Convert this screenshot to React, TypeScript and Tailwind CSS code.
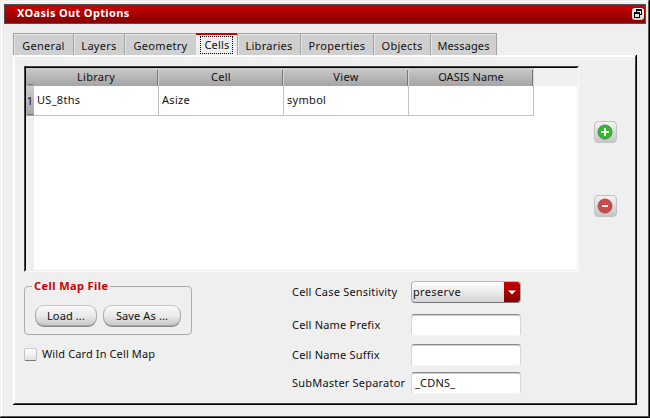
import React from "react";

const tabs = [
  { label: "General", box: "w-[60px]", text: "tracking-[0.27px]" },
  { label: "Layers", box: "w-[51px]", text: "tracking-[0.3px]" },
  { label: "Geometry", box: "w-[72px]", text: "tracking-[0.3px]" },
  { label: "Cells", box: "w-[41px]", text: "tracking-[0.2px]" },
  { label: "Libraries", box: "w-[63px]", text: "tracking-[0.25px]" },
  { label: "Properties", box: "w-[73px]", text: "tracking-[0.35px]" },
  { label: "Objects", box: "w-[57px]", text: "tracking-[0.3px]" },
  { label: "Messages", box: "w-[67px]", text: "tracking-[0.12px]" },
];

const columns = [
  { title: "Library", value: "US_8ths", head: "pl-[1px] tracking-[0.3px]" },
  { title: "Cell", value: "Asize", head: "pl-[1px] tracking-[0.3px]" },
  { title: "View", value: "symbol", head: "pl-[1px] tracking-[0.3px]" },
  { title: "OASIS Name", value: "", head: "pl-[1px] tracking-[0.05px]" },
];

function TitleBar() {
  return (
    <header className="flex h-5 items-center justify-between border border-[#505050] bg-linear-to-b from-[#cc0000] to-[#850000] pl-3 pr-[1px]">
      <h1 className="text-[11px] leading-[16px] pb-[2px] font-bold tracking-[0.34px] text-white">XOasis Out Options</h1>
      <button className="mb-[1px] flex size-3 items-center justify-center rounded-[3px] bg-linear-to-b from-white to-[#cfcfcf]">
        <svg width="10" height="10" viewBox="0 0 10 10" shapeRendering="crispEdges" fill="none" stroke="#000">
          <path d="M3.5 3V.5M3 1.5h6M3 .5h6M8.5 1v5M7 5.5h2M1 3.5h6M1 4.5h6M1.5 4v5M6.5 4v5M1 8.5h6" />
        </svg>
      </button>
    </header>
  );
}

function Tabs() {
  return (
    <nav className="flex h-[22px]">
      {tabs.map((t) =>
        t.label === "Cells" ? (
          <div key={t.label} className={`${t.box} border-t-2 border-[#cc0000] bg-[#efefef] pt-[1px] pr-1 pl-1`}>
            <div className="flex h-[18px] items-center justify-center border border-dotted border-black pb-[2px] pl-[1px]">
              <span className={t.text}>{t.label}</span>
            </div>
          </div>
        ) : (
          <div key={t.label} className={`${t.box} flex items-center justify-center border-t border-l border-[#a2a2a2] bg-[#cfcfcf] pt-[1px] shadow-[inset_1px_1px_0_#e6e6e6] last:border-r`}>
            <span className={t.text}>{t.label}</span>
          </div>
        ),
      )}
    </nav>
  );
}

function CellTable() {
  return (
    <div className="flex h-[206px] w-[555px] flex-col border border-t-[#444] border-l-[#444] border-r-[#fafafa] border-b-[#fafafa]">
      <div className="flex min-h-0 flex-1 flex-col border border-t-black border-r-[#efefef] border-b-[#efefef] border-l-black bg-white">
        <div className="flex h-[18px] bg-[#efefef]">
          <div className="flex w-2 flex-col justify-end bg-linear-to-b from-[#cbcbcb] to-[#a4a4a4] pr-[1px] pb-[1px] pl-[2px]">
            <i className="h-px bg-[#777]" />
          </div>
          {columns.map((c) => (
            <div key={c.title} className="flex w-[125px] items-center bg-linear-to-b from-[#cbcbcb] to-[#a4a4a4]">
              <span className={`${c.head} flex-1 pb-[2px] text-center`}>{c.title}</span>
              <i className="mt-0.5 h-4 w-px bg-[#777]" />
              <i className="mt-0.5 h-4 w-px bg-[#d5d5d5]" />
            </div>
          ))}
        </div>
        <div className="flex h-[30px]">
          <div className="flex w-2 flex-col items-center justify-between bg-linear-to-b from-[#cbcbcb] to-[#a4a4a4] pt-[7px] pb-[1px]">
            <span>1</span>
            <i className="h-px w-[5px] bg-[#777]" />
          </div>
          {columns.map((c) => (
            <div key={c.title} className="flex w-[125px] items-center border-r border-b border-[#c3c3c3] pb-[2px] pl-[3px] tracking-[0.3px]">
              {c.value}
            </div>
          ))}
        </div>
        <div className="w-2 flex-1 bg-[#efefef]" />
      </div>
    </div>
  );
}

function RoundButton({ plus }: { plus?: boolean }) {
  return (
    <button className="flex h-[22px] w-[23px] items-center justify-center rounded-[4px] border border-[#c2c2c2] bg-linear-to-b from-[#f3f3f3] to-[#c6c6c6] pr-[1px]">
      <svg width="16" height="16" viewBox="0 0 16 16">
        <circle cx="8" cy="8" r="7" fill={plus ? "#36b82e" : "#cc4b49"} stroke={plus ? "#468c43" : "#9b5553"} />
        <path d={plus ? "M4 8h8M8 4v8" : "M5 8h6"} stroke="#f3f7f0" strokeWidth="2" />
      </svg>
    </button>
  );
}

function PillButton({ label, size }: { label: string; size: string }) {
  return (
    <button className={`${size} h-[22px] rounded-[9px] border border-t-[#c8c8c8] border-r-[#aaa] border-b-[#858585] border-l-[#aaa] bg-linear-to-b from-[#fafafa] via-[#e9e9e9] to-[#c6c6c6] pb-[2px] tracking-[0.12px] shadow-[inset_0_-1px_0_#aaa]`}>
      {label}
    </button>
  );
}

function Field({ label, value, height }: { label: string; value: string; height: string }) {
  return (
    <label className={`${height} flex items-start`}>
      <span className="w-[119px] leading-[22px] whitespace-nowrap tracking-[0.2px]">{label}</span>
      <span className="h-[22px] w-[110px] rounded-[3px] border border-t-[#898989] border-r-[#d5d5d5] border-b-[#f5f5f5] border-l-[#d5d5d5] bg-white pl-[3px] leading-[20px] tracking-[0.2px] shadow-[inset_0_1px_0_#d0d0d0]">
        {value}
      </span>
    </label>
  );
}

export default function App() {
  return (
    <main className="h-[418px] w-[650px] border-r border-b border-black bg-[#efefef] font-['Noto_Sans','Open_Sans',sans-serif] text-[11px] leading-[15px] text-[#111]">
      <div className="h-full border border-t-[#efefef] border-r-[#555] border-b-[#555] border-l-[#efefef]">
        <div className="h-full border-t border-l border-white pt-[2px] pr-[2px] pl-[2px]">
          <TitleBar />
          <div className="pt-[9px] pr-[9px] pl-[9px]">
            <Tabs />
            <section className="h-[350px] border-r border-b border-black">
              <div className="h-full border-t-2 border-r border-b border-l-2 border-t-white border-r-[#444] border-b-[#444] border-l-white">
                <div className="flex pt-[9px] pl-[9px]">
                  <CellTable />
                  <div className="flex flex-col gap-[52px] pt-[55px] pl-[15px]">
                    <RoundButton plus />
                    <RoundButton />
                  </div>
                </div>
                <div className="flex pl-[9px]">
                  <div className="w-[268px] pt-[6px]">
                    <fieldset className="h-[57px] w-[167px] rounded-[4px] border border-[#acacac] px-[10px]">
                      <legend className="-ml-[3px] px-[2px] pb-[2px] text-[11px] font-bold tracking-[0.42px] text-[#cc0000]">Cell Map File</legend>
                      <div className="flex gap-[6px] pt-[10px]">
                        <PillButton label="Load ..." size="w-[62px]" />
                        <PillButton label="Save As ..." size="w-[78px]" />
                      </div>
                    </fieldset>
                    <label className="mt-[12px] flex items-center gap-[5px]">
                      <span className="size-[13px] rounded-[2px] border border-t-[#ccc] border-r-[#c4c4c4] border-b-[#777] border-l-[#c4c4c4] bg-linear-to-b from-white to-[#e2e2e2]" />
                      <span className="pb-[2px] leading-[13px] tracking-[0.12px]">Wild Card In Cell Map</span>
                    </label>
                  </div>
                  <div className="pt-[9px]">
                    <div className="flex h-[33px] items-start">
                      <span className="w-[119px] leading-[22px] tracking-[0.2px]">Cell Case Sensitivity</span>
                      <button className="flex h-[22px] w-[110px] overflow-hidden rounded-[4px] border border-t-[#bbb] border-r-[#aaa] border-b-[#777] border-l-[#aaa] bg-linear-to-b from-white to-[#d4d4d4] text-left">
                        <span className="flex-1 pl-[1px] leading-[20px] tracking-[0.36px]">preserve</span>
                        <span className="flex h-full w-4 items-center justify-center bg-linear-to-b from-[#cc0000] to-[#850000]">
                          <svg width="8" height="5" viewBox="0 0 8 5"><path d="M0 .5h8L4 4.5z" fill="#fff" /></svg>
                        </span>
                      </button>
                    </div>
                    <Field label="Cell Name Prefix" value="" height="h-[30px]" />
                    <Field label="Cell Name Suffix" value="" height="h-[28px]" />
                    <Field label="SubMaster Separator" value="_CDNS_" height="h-[22px]" />
                  </div>
                </div>
              </div>
            </section>
          </div>
        </div>
      </div>
    </main>
  );
}
